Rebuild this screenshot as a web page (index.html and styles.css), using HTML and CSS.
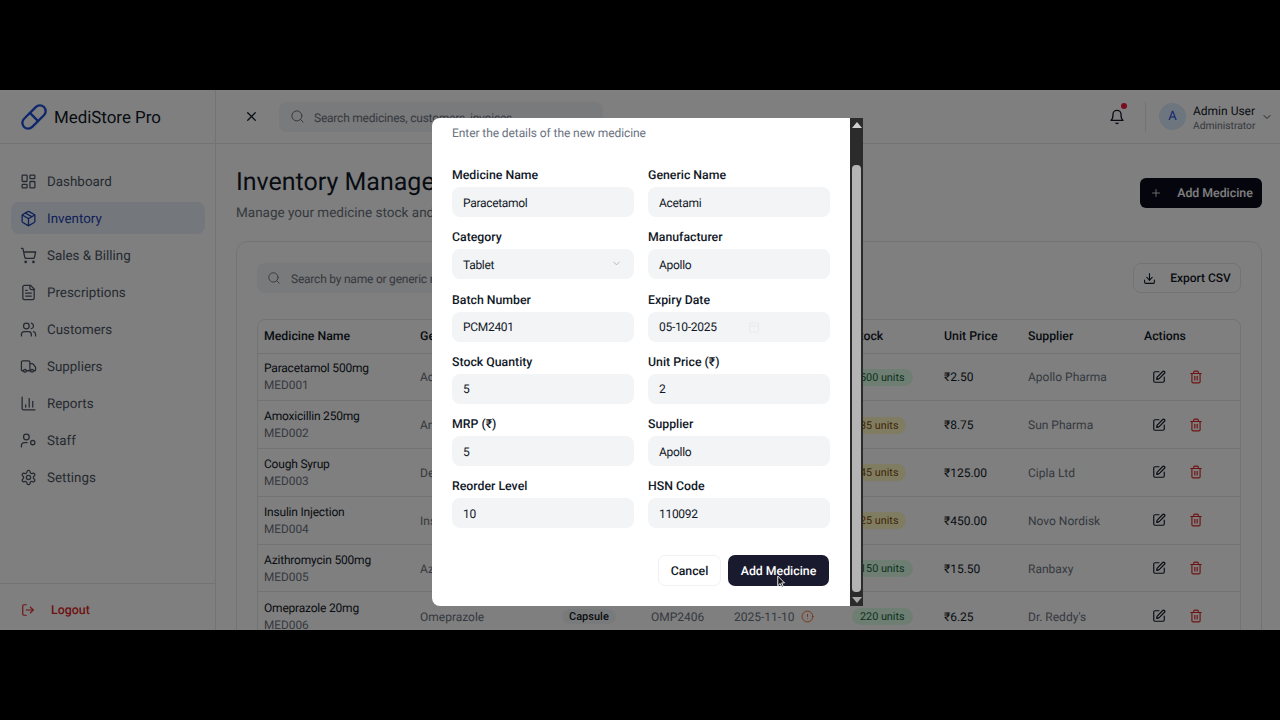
FILE: index.html
```html
<!DOCTYPE html>
<html lang="en">
<head>
  <meta charset="UTF-8" />
  <title>MediStore Pro - Inventory</title>
  <link rel="stylesheet" href="styles.css">
</head>
<body>
  <svg class="sprite" xmlns="http://www.w3.org/2000/svg">
    <symbol id="i-pill" viewBox="0 0 24 24"><path d="m10.5 20.5 10-10a4.95 4.95 0 1 0-7-7l-10 10a4.95 4.95 0 1 0 7 7Z"/><path d="m8.5 8.5 7 7"/></symbol>
    <symbol id="i-dash" viewBox="0 0 24 24"><rect width="7" height="9" x="3" y="3" rx="1"/><rect width="7" height="5" x="14" y="3" rx="1"/><rect width="7" height="9" x="14" y="12" rx="1"/><rect width="7" height="5" x="3" y="16" rx="1"/></symbol>
    <symbol id="i-package" viewBox="0 0 24 24"><path d="M11 21.73a2 2 0 0 0 2 0l7-4A2 2 0 0 0 21 16V8a2 2 0 0 0-1-1.73l-7-4a2 2 0 0 0-2 0l-7 4A2 2 0 0 0 3 8v8a2 2 0 0 0 1 1.73z"/><path d="M12 22V12"/><path d="m3.3 7 7.703 4.734a2 2 0 0 0 1.994 0L20.7 7"/><path d="m7.5 4.27 9 5.15"/></symbol>
    <symbol id="i-cart" viewBox="0 0 24 24"><circle cx="8" cy="21" r="1"/><circle cx="19" cy="21" r="1"/><path d="M2.05 2.05h2l2.66 12.42a2 2 0 0 0 2 1.58h9.78a2 2 0 0 0 1.95-1.57l1.65-7.43H5.12"/></symbol>
    <symbol id="i-file" viewBox="0 0 24 24"><path d="M15 2H6a2 2 0 0 0-2 2v16a2 2 0 0 0 2 2h12a2 2 0 0 0 2-2V7Z"/><path d="M14 2v4a2 2 0 0 0 2 2h4"/><path d="M10 9H8"/><path d="M16 13H8"/><path d="M16 17H8"/></symbol>
    <symbol id="i-users" viewBox="0 0 24 24"><path d="M16 21v-2a4 4 0 0 0-4-4H6a4 4 0 0 0-4 4v2"/><circle cx="9" cy="7" r="4"/><path d="M22 21v-2a4 4 0 0 0-3-3.87"/><path d="M16 3.13a4 4 0 0 1 0 7.75"/></symbol>
    <symbol id="i-truck" viewBox="0 0 24 24"><path d="M14 18V6a2 2 0 0 0-2-2H4a2 2 0 0 0-2 2v11a1 1 0 0 0 1 1h2"/><path d="M15 18H9"/><path d="M19 18h2a1 1 0 0 0 1-1v-3.65a1 1 0 0 0-.22-.624l-3.48-4.35A1 1 0 0 0 17.52 8H14"/><circle cx="17" cy="18" r="2"/><circle cx="7" cy="18" r="2"/></symbol>
    <symbol id="i-chart" viewBox="0 0 24 24"><path d="M3 3v16a2 2 0 0 0 2 2h16"/><path d="M8 17v-3"/><path d="M13 17V5"/><path d="M18 17V9"/></symbol>
    <symbol id="i-staff" viewBox="0 0 24 24"><circle cx="9" cy="7" r="4"/><circle cx="18" cy="15" r="3"/><path d="M10 15H6a4 4 0 0 0-4 4v2"/></symbol>
    <symbol id="i-gear" viewBox="0 0 24 24"><path d="M12.22 2h-.44a2 2 0 0 0-2 2v.18a2 2 0 0 1-1 1.73l-.43.25a2 2 0 0 1-2 0l-.15-.08a2 2 0 0 0-2.73.73l-.22.38a2 2 0 0 0 .73 2.73l.15.1a2 2 0 0 1 1 1.72v.51a2 2 0 0 1-1 1.74l-.15.09a2 2 0 0 0-.73 2.73l.22.38a2 2 0 0 0 2.73.73l.15-.08a2 2 0 0 1 2 0l.43.25a2 2 0 0 1 1 1.73V20a2 2 0 0 0 2 2h.44a2 2 0 0 0 2-2v-.18a2 2 0 0 1 1-1.73l.43-.25a2 2 0 0 1 2 0l.15.08a2 2 0 0 0 2.73-.73l.22-.39a2 2 0 0 0-.73-2.73l-.15-.08a2 2 0 0 1-1-1.74v-.5a2 2 0 0 1 1-1.74l.15-.09a2 2 0 0 0 .73-2.73l-.22-.38a2 2 0 0 0-2.73-.73l-.15.08a2 2 0 0 1-2 0l-.43-.25a2 2 0 0 1-1-1.73V4a2 2 0 0 0-2-2z"/><circle cx="12" cy="12" r="3"/></symbol>
    <symbol id="i-logout" viewBox="0 0 24 24"><path d="M9 21H5a2 2 0 0 1-2-2V5a2 2 0 0 1 2-2h4"/><polyline points="16 17 21 12 16 7"/><line x1="21" x2="9" y1="12" y2="12"/></symbol>
    <symbol id="i-x" viewBox="0 0 24 24"><path d="M18 6 6 18"/><path d="m6 6 12 12"/></symbol>
    <symbol id="i-search" viewBox="0 0 24 24"><circle cx="11" cy="11" r="8"/><path d="m21 21-4.3-4.3"/></symbol>
    <symbol id="i-bell" viewBox="0 0 24 24"><path d="M6 8a6 6 0 0 1 12 0c0 7 3 9 3 9H3s3-2 3-9"/><path d="M10.3 21a1.94 1.94 0 0 0 3.4 0"/></symbol>
    <symbol id="i-chevron" viewBox="0 0 24 24"><path d="m6 9 6 6 6-6"/></symbol>
    <symbol id="i-plus" viewBox="0 0 24 24"><path d="M5 12h14"/><path d="M12 5v14"/></symbol>
    <symbol id="i-download" viewBox="0 0 24 24"><path d="M21 15v4a2 2 0 0 1-2 2H5a2 2 0 0 1-2-2v-4"/><polyline points="7 10 12 15 17 10"/><line x1="12" x2="12" y1="15" y2="3"/></symbol>
    <symbol id="i-edit" viewBox="0 0 24 24"><path d="M12 3H5a2 2 0 0 0-2 2v14a2 2 0 0 0 2 2h14a2 2 0 0 0 2-2v-7"/><path d="M18.375 2.625a1 1 0 0 1 3 3l-9.013 9.014a2 2 0 0 1-.853.505l-2.873.84a.5.5 0 0 1-.62-.62l.84-2.873a2 2 0 0 1 .506-.852z"/></symbol>
    <symbol id="i-trash" viewBox="0 0 24 24"><path d="M3 6h18"/><path d="M19 6v14c0 1-1 2-2 2H7c-1 0-2-1-2-2V6"/><path d="M8 6V4c0-1 1-2 2-2h4c1 0 2 1 2 2v2"/><line x1="10" x2="10" y1="11" y2="17"/><line x1="14" x2="14" y1="11" y2="17"/></symbol>
    <symbol id="i-alert" viewBox="0 0 24 24"><circle cx="12" cy="12" r="10"/><line x1="12" x2="12" y1="8" y2="12"/><line x1="12" x2="12.01" y1="16" y2="16"/></symbol>
    <symbol id="i-calendar" viewBox="0 0 24 24"><rect width="18" height="18" x="3" y="4" rx="2"/><path d="M3 10h18"/></symbol>
  </svg>

  <div class="screen">
    <aside class="sidebar">
      <div class="brand">
        <svg class="icon brand-icon"><use href="#i-pill"/></svg>
        <span>MediStore Pro</span>
      </div>
      <nav class="nav">
        <a class="nav-item"><svg class="icon"><use href="#i-dash"/></svg><span>Dashboard</span></a>
        <a class="nav-item active"><svg class="icon"><use href="#i-package"/></svg><span>Inventory</span></a>
        <a class="nav-item"><svg class="icon"><use href="#i-cart"/></svg><span>Sales &amp; Billing</span></a>
        <a class="nav-item"><svg class="icon"><use href="#i-file"/></svg><span>Prescriptions</span></a>
        <a class="nav-item"><svg class="icon"><use href="#i-users"/></svg><span>Customers</span></a>
        <a class="nav-item"><svg class="icon"><use href="#i-truck"/></svg><span>Suppliers</span></a>
        <a class="nav-item"><svg class="icon"><use href="#i-chart"/></svg><span>Reports</span></a>
        <a class="nav-item"><svg class="icon"><use href="#i-staff"/></svg><span>Staff</span></a>
        <a class="nav-item"><svg class="icon"><use href="#i-gear"/></svg><span>Settings</span></a>
      </nav>
      <div class="logout">
        <svg class="icon"><use href="#i-logout"/></svg>Logout
      </div>
    </aside>

    <div class="main">
      <header class="topbar">
        <svg class="icon close-icon"><use href="#i-x"/></svg>
        <div class="top-search">
          <svg class="icon"><use href="#i-search"/></svg>
          <span>Search medicines, customers, invoices...</span>
        </div>
        <div class="top-right">
          <div class="bell">
            <svg class="icon"><use href="#i-bell"/></svg>
            <span class="dot"></span>
          </div>
          <div class="user">
            <div class="avatar">A</div>
            <div class="user-text">
              <div class="user-name">Admin User</div>
              <div class="user-role">Administrator</div>
            </div>
            <svg class="icon chevron"><use href="#i-chevron"/></svg>
          </div>
        </div>
      </header>

      <section class="content">
        <div class="page-head">
          <div>
            <h1>Inventory Management</h1>
            <p>Manage your medicine stock and inventory</p>
          </div>
          <button class="btn-add"><svg class="icon"><use href="#i-plus"/></svg><span>Add Medicine</span></button>
        </div>

        <div class="card">
          <div class="card-tools">
            <div class="card-search">
              <svg class="icon"><use href="#i-search"/></svg>
              <span>Search by name or generic name...</span>
            </div>
            <button class="btn-export"><svg class="icon"><use href="#i-download"/></svg><span>Export CSV</span></button>
          </div>

          <div class="table-wrap">
            <table>
              <thead>
                <tr>
                  <th class="c-name">Medicine Name</th>
                  <th class="c-generic">Generic Name</th>
                  <th class="c-cat">Category</th>
                  <th class="c-batch">Batch</th>
                  <th class="c-exp">Expiry</th>
                  <th class="c-stock">Stock</th>
                  <th class="c-price">Unit Price</th>
                  <th class="c-sup">Supplier</th>
                  <th>Actions</th>
                </tr>
              </thead>
              <tbody>
                <tr>
                  <td><div class="med">Paracetamol 500mg</div><div class="code">MED001</div></td>
                  <td class="muted">Acetaminophen</td>
                  <td><span class="tag">Tablet</span></td>
                  <td class="muted">PCM2401</td>
                  <td class="muted">2025-12-15</td>
                  <td><span class="units ok">500 units</span></td>
                  <td>₹2.50</td>
                  <td class="muted">Apollo Pharma</td>
                  <td><span class="actions"><svg class="icon"><use href="#i-edit"/></svg><svg class="icon del"><use href="#i-trash"/></svg></span></td>
                </tr>
                <tr>
                  <td><div class="med">Amoxicillin 250mg</div><div class="code">MED002</div></td>
                  <td class="muted">Amoxicillin</td>
                  <td><span class="tag">Capsule</span></td>
                  <td class="muted">AMX2402</td>
                  <td class="muted">2025-08-20</td>
                  <td><span class="units low">35 units</span></td>
                  <td>₹8.75</td>
                  <td class="muted">Sun Pharma</td>
                  <td><span class="actions"><svg class="icon"><use href="#i-edit"/></svg><svg class="icon del"><use href="#i-trash"/></svg></span></td>
                </tr>
                <tr>
                  <td><div class="med">Cough Syrup</div><div class="code">MED003</div></td>
                  <td class="muted">Dextromethorphan</td>
                  <td><span class="tag">Syrup</span></td>
                  <td class="muted">CSY2403</td>
                  <td class="muted">2025-06-30</td>
                  <td><span class="units low">45 units</span></td>
                  <td>₹125.00</td>
                  <td class="muted">Cipla Ltd</td>
                  <td><span class="actions"><svg class="icon"><use href="#i-edit"/></svg><svg class="icon del"><use href="#i-trash"/></svg></span></td>
                </tr>
                <tr>
                  <td><div class="med">Insulin Injection</div><div class="code">MED004</div></td>
                  <td class="muted">Insulin</td>
                  <td><span class="tag">Injection</span></td>
                  <td class="muted">INS2404</td>
                  <td class="muted">2025-04-10</td>
                  <td><span class="units low">25 units</span></td>
                  <td>₹450.00</td>
                  <td class="muted">Novo Nordisk</td>
                  <td><span class="actions"><svg class="icon"><use href="#i-edit"/></svg><svg class="icon del"><use href="#i-trash"/></svg></span></td>
                </tr>
                <tr>
                  <td><div class="med">Azithromycin 500mg</div><div class="code">MED005</div></td>
                  <td class="muted">Azithromycin</td>
                  <td><span class="tag">Tablet</span></td>
                  <td class="muted">AZI2405</td>
                  <td class="muted">2026-01-25</td>
                  <td><span class="units ok">150 units</span></td>
                  <td>₹15.50</td>
                  <td class="muted">Ranbaxy</td>
                  <td><span class="actions"><svg class="icon"><use href="#i-edit"/></svg><svg class="icon del"><use href="#i-trash"/></svg></span></td>
                </tr>
                <tr>
                  <td><div class="med">Omeprazole 20mg</div><div class="code">MED006</div></td>
                  <td class="muted">Omeprazole</td>
                  <td><span class="tag">Capsule</span></td>
                  <td class="muted">OMP2406</td>
                  <td class="muted">2025-11-10 <svg class="icon warn"><use href="#i-alert"/></svg></td>
                  <td><span class="units ok">220 units</span></td>
                  <td>₹6.25</td>
                  <td class="muted">Dr. Reddy's</td>
                  <td><span class="actions"><svg class="icon"><use href="#i-edit"/></svg><svg class="icon del"><use href="#i-trash"/></svg></span></td>
                </tr>
              </tbody>
            </table>
          </div>
        </div>
      </section>
    </div>

    <div class="backdrop"></div>

    <div class="modal">
      <div class="modal-body">
        <p class="modal-sub">Enter the details of the new medicine</p>
        <form class="form-grid">
          <div class="field"><label>Medicine Name</label><div class="input">Paracetamol</div></div>
          <div class="field"><label>Generic Name</label><div class="input">Acetami</div></div>
          <div class="field"><label>Category</label><div class="input">Tablet<svg class="icon select-arrow"><use href="#i-chevron"/></svg></div></div>
          <div class="field"><label>Manufacturer</label><div class="input">Apollo</div></div>
          <div class="field"><label>Batch Number</label><div class="input">PCM2401</div></div>
          <div class="field"><label>Expiry Date</label><div class="input">05-10-2025<svg class="icon date-icon"><use href="#i-calendar"/></svg></div></div>
          <div class="field"><label>Stock Quantity</label><div class="input">5</div></div>
          <div class="field"><label>Unit Price (₹)</label><div class="input">2</div></div>
          <div class="field"><label>MRP (₹)</label><div class="input">5</div></div>
          <div class="field"><label>Supplier</label><div class="input">Apollo</div></div>
          <div class="field"><label>Reorder Level</label><div class="input">10</div></div>
          <div class="field"><label>HSN Code</label><div class="input">110092</div></div>
        </form>
        <div class="modal-foot">
          <button class="btn-cancel" type="button">Cancel</button>
          <button class="btn-save" type="button">Add Medicine</button>
        </div>
      </div>
      <div class="scrollbar">
        <span class="arrow-up"></span>
        <span class="thumb"></span>
        <span class="arrow-down"></span>
      </div>
    </div>

    <svg class="cursor" viewBox="0 0 12 18"><path d="M1 1v13l3.2-3 2.2 5 2-.9-2.2-4.9H10z"/></svg>
  </div>
</body>
</html>
```

FILE: styles.css
```css
* {
  box-sizing: border-box;
}

html,
body {
  height: 100%;
}

body {
  margin: 0;
  background: #000;
  font-family: Roboto, "Noto Sans", Arial, sans-serif;
  font-size: 13px;
  color: #111827;
  text-rendering: geometricPrecision;
  display: flex;
  align-items: center;
  overflow: hidden;
}

.sprite {
  display: none;
}

.icon {
  width: 16px;
  height: 16px;
  fill: none;
  stroke: currentColor;
  stroke-width: 2;
  stroke-linecap: round;
  stroke-linejoin: round;
  flex-shrink: 0;
}

button {
  white-space: nowrap;
  text-rendering: geometricPrecision;
}

.screen {
  position: relative;
  width: 1280px;
  height: 540px;
  background: #fff;
  display: flex;
  overflow: hidden;
}

/* sidebar */
.sidebar {
  width: 216px;
  flex-shrink: 0;
  border-right: 1px solid #e5e7eb;
  display: flex;
  flex-direction: column;
}

.brand {
  height: 54px;
  padding: 0 20px;
  display: flex;
  align-items: center;
  gap: 6px;
  font-size: 16.9px;
  border-bottom: 1px solid #e5e7eb;
}

.brand span {
  padding-top: 2px;
}

.brand-icon {
  width: 28px;
  height: 28px;
  color: #1d4ed8;
}

.nav {
  flex: 1;
  padding: 21px 10px 0 11px;
  display: flex;
  flex-direction: column;
  gap: 5px;
}

.nav-item {
  height: 32px;
  padding: 0 9px;
  display: flex;
  align-items: center;
  gap: 10px;
  border-radius: 8px;
  font-size: 13.4px;
  color: #4b5563;
}

.nav-item span {
  padding-top: 3px;
}

.nav-item .icon {
  width: 17px;
  height: 17px;
  stroke-width: 1.8;
}

.nav-item.active {
  background: #e9f1fa;
  color: #1e40af;
}

.logout {
  height: 47px;
  border-top: 1px solid #e5e7eb;
  padding: 6px 21px 0;
  display: flex;
  align-items: center;
  gap: 16px;
  font-size: 12.4px;
  font-weight: 500;
  color: #dc2626;
}

.logout .icon {
  width: 14px;
  height: 14px;
}

/* top bar */
.main {
  flex: 1;
  min-width: 0;
  display: flex;
  flex-direction: column;
}

.topbar {
  height: 54px;
  flex-shrink: 0;
  padding: 0 7px 0 28px;
  display: flex;
  align-items: center;
  border-bottom: 1px solid #e5e7eb;
}

.close-icon {
  width: 15px;
  height: 15px;
  margin-right: 20px;
}

.top-search {
  width: 324px;
  height: 30px;
  padding: 0 11px;
  display: flex;
  align-items: center;
  gap: 9px;
  background: #f3f4f6;
  border-radius: 8px;
  color: #6b7280;
  font-size: 12px;
  letter-spacing: -0.22px;
  white-space: nowrap;
  overflow: hidden;
}

.top-search span {
  padding-top: 3px;
}

.top-search .icon {
  width: 15px;
  height: 15px;
  stroke-width: 1.6;
}

.top-right {
  margin-left: auto;
  display: flex;
  align-items: center;
}

.bell {
  position: relative;
  display: flex;
  padding-right: 20px;
}

.dot {
  position: absolute;
  top: -6px;
  left: 12px;
  width: 6px;
  height: 6px;
  border-radius: 50%;
  background: #ef1a3a;
}

.user {
  height: 30px;
  padding-left: 13px;
  display: flex;
  align-items: center;
  gap: 7px;
  border-left: 1px solid #e5e7eb;
}

.avatar {
  width: 27px;
  height: 27px;
  border-radius: 50%;
  background: #dbeafe;
  color: #1d4ed8;
  display: flex;
  align-items: center;
  justify-content: center;
  font-size: 13px;
}

.user-text {
  width: 62px;
  padding-top: 3px;
  white-space: nowrap;
}

.user-name {
  font-size: 12px;
  line-height: 15px;
}

.user-role {
  font-size: 10.3px;
  line-height: 14px;
  color: #6b7280;
}

.chevron {
  width: 12px;
  height: 12px;
  margin-left: -1px;
  stroke-width: 1.6;
}

/* page */
.content {
  flex: 1;
  padding: 21px 18px 0 20px;
}

.page-head {
  display: flex;
  justify-content: space-between;
  align-items: flex-start;
  height: 56px;
  margin-bottom: 20px;
}

h1 {
  margin: 3px 0 0;
  font-size: 25px;
  font-weight: 400;
  line-height: 30px;
  white-space: nowrap;
}

.page-head p {
  margin: 6px 0 0;
  font-size: 13.5px;
  line-height: 18px;
  color: #6b7280;
}

.btn-add {
  width: 122px;
  height: 30px;
  margin-top: 13px;
  padding: 0 0 0 1px;
  border: 0;
  border-radius: 6px;
  background: #0b0b1a;
  color: #fff;
  font: inherit;
  font-size: 12.3px;
  font-weight: 500;
  display: flex;
  align-items: center;
  justify-content: center;
  gap: 15px;
}

.btn-add span {
  padding-top: 2px;
}

.btn-add .icon {
  width: 12px;
  height: 12px;
  stroke-width: 1.6;
}

.card {
  height: 400px;
  border: 1px solid #e5e7eb;
  border-radius: 12px;
  padding: 21px 20px 0;
}

.card-tools {
  display: flex;
  justify-content: space-between;
  margin-bottom: 26px;
}

.card-search {
  width: 340px;
  height: 30px;
  padding: 0 10px;
  display: flex;
  align-items: center;
  gap: 10px;
  background: #f3f4f6;
  border-radius: 8px;
  color: #6b7280;
  font-size: 12px;
  letter-spacing: -0.22px;
  white-space: nowrap;
  overflow: hidden;
}

.card-search span {
  padding-top: 1px;
}

.card-search .icon {
  width: 14px;
  height: 14px;
  stroke-width: 1.6;
}

.btn-export {
  width: 108px;
  height: 30px;
  background: #fff;
  border: 1px solid #e5e7eb;
  border-radius: 8px;
  font: inherit;
  font-size: 12px;
  font-weight: 500;
  color: #111827;
  display: flex;
  align-items: center;
  justify-content: center;
  gap: 14px;
}

.btn-export .icon {
  width: 13px;
  height: 13px;
}

/* table */
.table-wrap {
  border: 1px solid #e5e7eb;
  border-radius: 8px;
  overflow: hidden;
}

table {
  width: 100%;
  border-collapse: collapse;
  table-layout: fixed;
  font-size: 12px;
}

th {
  height: 33px;
  padding: 2px 7px 0;
  text-align: left;
  font-size: 12.3px;
  font-weight: 500;
  white-space: nowrap;
}

td {
  height: 47.8px;
  padding: 1px 7px 0;
  border-top: 1px solid #e5e7eb;
  white-space: nowrap;
}

th:first-child,
td:first-child {
  padding-left: 6px;
}

.c-name { width: 155px; }
.c-generic { width: 127px; }
.c-cat { width: 104px; }
.c-batch { width: 83px; }
.c-exp { width: 118px; }
.c-stock { width: 92px; }
.c-price { width: 84px; }
.c-sup { width: 116px; }

.med {
  font-size: 12px;
  letter-spacing: -0.2px;
  line-height: 17px;
}

.code {
  font-size: 11.8px;
  line-height: 17px;
  color: #6b7280;
}

.muted {
  color: #6b7280;
}

.tag {
  display: inline-block;
  margin-left: 15px;
  padding: 1px 7px;
  border-radius: 9px;
  background: #f3f4f6;
  font-size: 11px;
  font-weight: 500;
  color: #111827;
}

.units {
  display: inline-block;
  padding: 0 8px;
  height: 17px;
  line-height: 17px;
  border-radius: 9px;
  font-size: 10.8px;
}

.units.ok {
  background: #dcfce7;
  color: #166534;
}

.units.low {
  background: #fef9c3;
  color: #854d0e;
}

.warn {
  width: 13px;
  height: 13px;
  margin-left: 3px;
  vertical-align: -2px;
  color: #ea580c;
  stroke-width: 1.6;
}

.actions {
  display: flex;
  gap: 23px;
  margin-top: -1px;
  padding-left: 8px;
}

.actions .icon {
  width: 14px;
  height: 14px;
}

.actions .del {
  color: #dc2626;
}

/* modal */
.backdrop {
  position: absolute;
  inset: 0;
  background: rgba(0, 0, 0, 0.5);
}

.modal {
  position: absolute;
  left: 432px;
  top: 28px;
  width: 431px;
  height: 488px;
  background: #fff;
  border-radius: 8px 0 0 8px;
  display: flex;
  overflow: hidden;
}

.modal-body {
  flex: 1;
  padding: 6px 20px 0;
}

.modal-sub {
  margin: 0 0 23px;
  font-size: 12px;
  letter-spacing: -0.08px;
  line-height: 18px;
  color: #6b7280;
}

.form-grid {
  display: grid;
  grid-template-columns: 182px 182px;
  column-gap: 14px;
  row-gap: 10.3px;
}

.field {
  display: flex;
  flex-direction: column;
  gap: 3px;
}

label {
  padding-top: 3px;
  font-size: 12.3px;
  font-weight: 500;
  line-height: 16px;
}

.input {
  position: relative;
  height: 30px;
  padding: 1px 11px 0;
  display: flex;
  align-items: center;
  background: #f3f4f6;
  border-radius: 8px;
  font-size: 12px;
  letter-spacing: -0.3px;
}

.select-arrow {
  position: absolute;
  right: 12px;
  top: 9px;
  width: 11px;
  height: 11px;
  color: #9ca3af;
  stroke-width: 1.6;
}

.date-icon {
  position: absolute;
  left: 100px;
  top: 9px;
  width: 12px;
  height: 12px;
  color: #e5e7eb;
  stroke-width: 1.5;
}

.modal-foot {
  margin: 27px 1px 0 0;
  display: flex;
  justify-content: flex-end;
  gap: 7px;
}

.modal-foot button {
  height: 31px;
  padding: 2px 0 0;
  border-radius: 7px;
  font: inherit;
  font-weight: 500;
  font-size: 12.3px;
}

.btn-cancel {
  width: 63px;
  background: #fff;
  border: 1px solid #f0f1f3;
  color: #111827;
}

.btn-save {
  width: 101px;
  background: #1a1a2e;
  border: 0;
  color: #fff;
}

.scrollbar {
  width: 13px;
  flex-shrink: 0;
  background: #2b2b2b;
  display: flex;
  flex-direction: column;
  align-items: center;
  padding: 4px 0 3px;
}

.arrow-up,
.arrow-down {
  width: 0;
  height: 0;
  border-left: 5px solid transparent;
  border-right: 5px solid transparent;
}

.arrow-up {
  border-bottom: 6px solid #d0d0d0;
}

.arrow-down {
  border-top: 6px solid #a8a8a8;
}

.thumb {
  width: 9px;
  flex: 1;
  margin: 37px 0 5px;
  background: #b4b4b4;
  border-radius: 4px;
}

.cursor {
  position: absolute;
  left: 777px;
  top: 485px;
  width: 9px;
  height: 14px;
  fill: #111;
  stroke: #fff;
  stroke-width: 1.2;
}
```
